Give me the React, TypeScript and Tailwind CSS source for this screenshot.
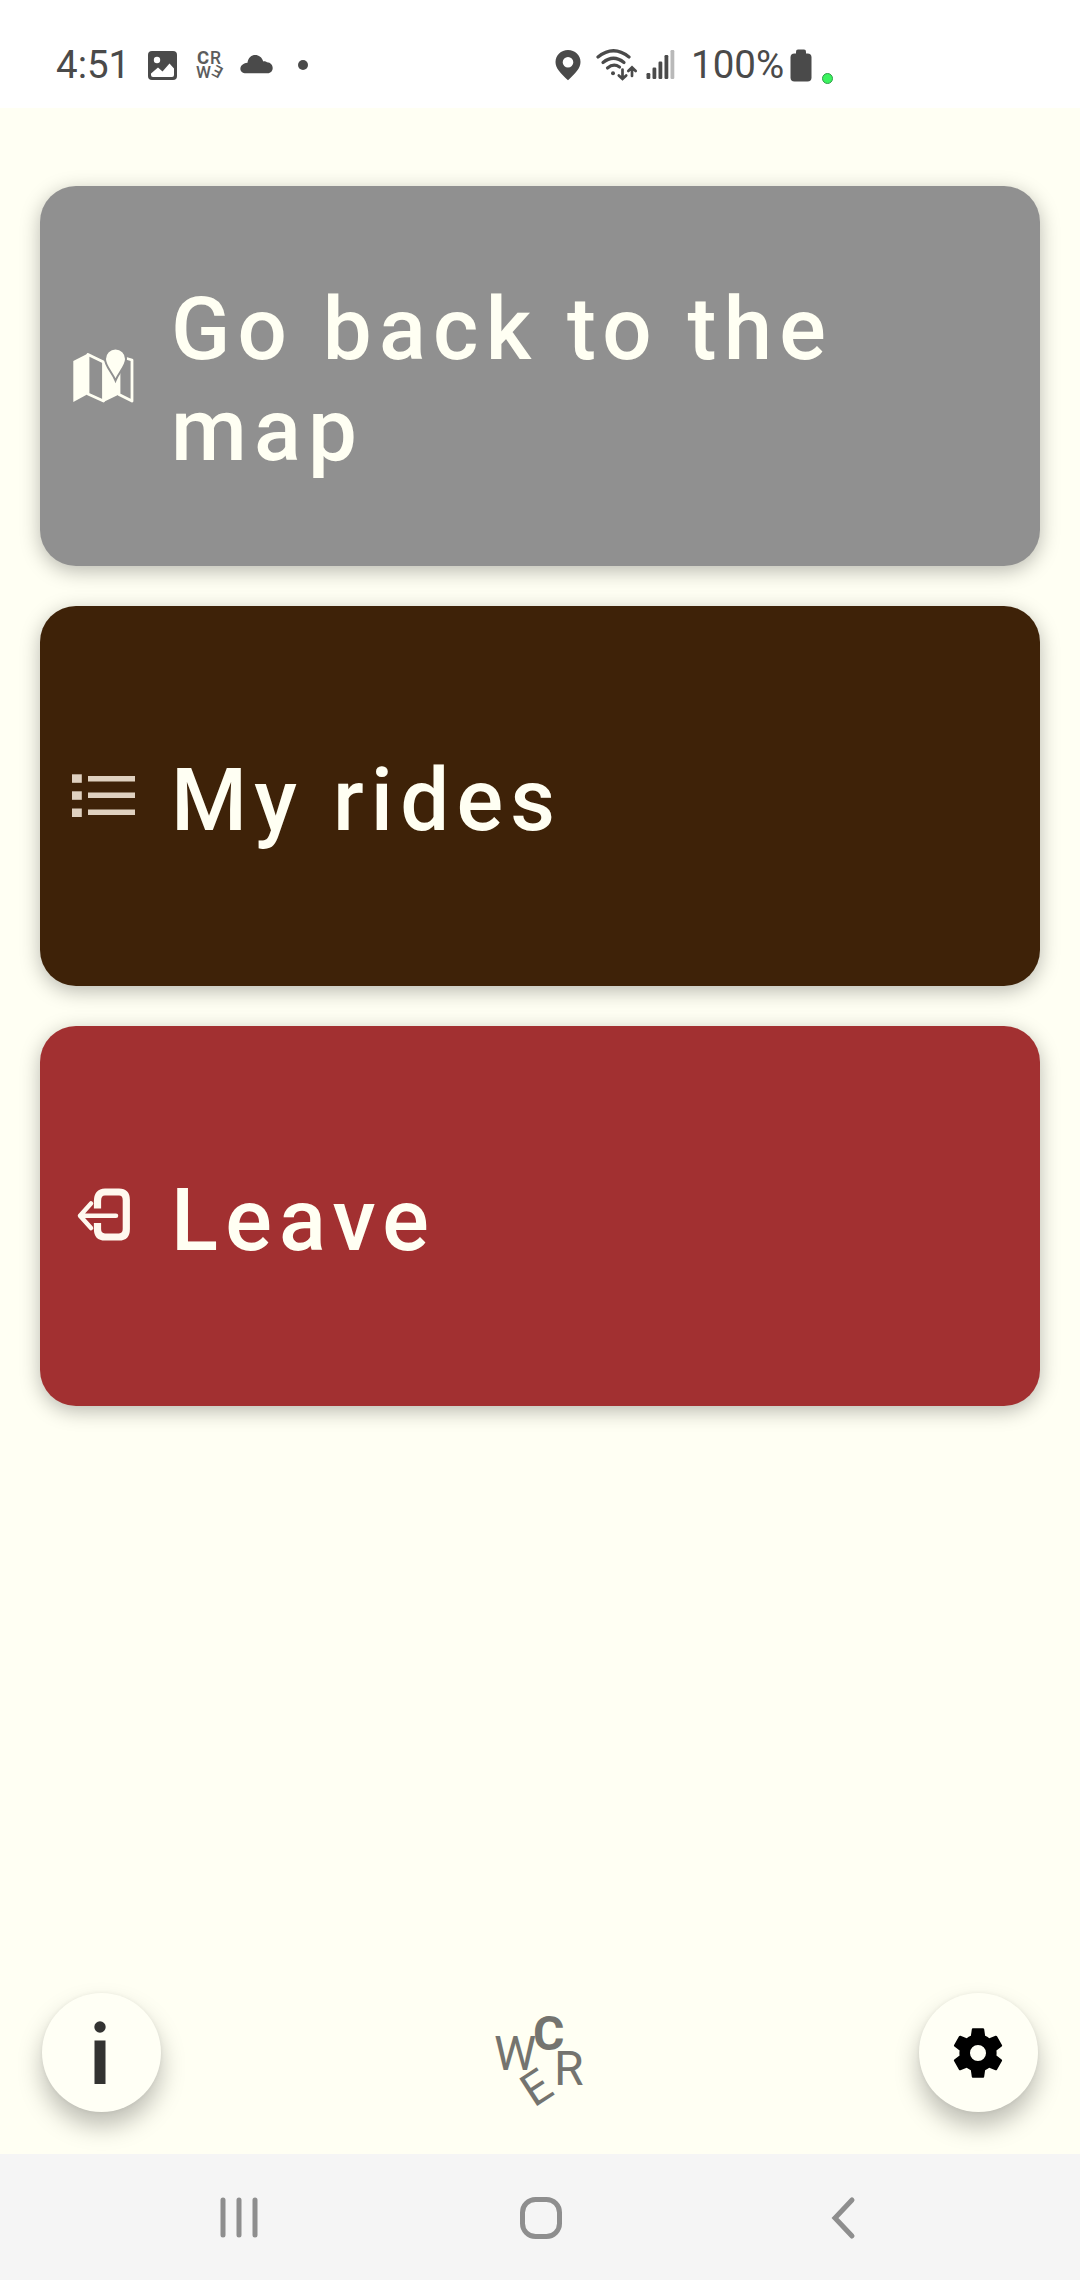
import type { ReactNode } from "react";

const ACTIONS = [
  { label: "Go back to the map", bg: "bg-[#909090]", icon: <MapIcon /> },
  { label: "My rides", bg: "bg-[#3e2208]", icon: <ListIcon /> },
  { label: "Leave", bg: "bg-[#a23031]", icon: <LeaveIcon /> },
];

export default function App() {
  return (
    <div className="flex flex-col h-[2280px] w-[1080px] bg-[#fffff3] font-[Roboto,sans-serif] overflow-hidden">
      <StatusBar />

      {/* Menu cards */}
      <main className="flex-1 flex flex-col gap-10 px-10 pt-[78px]">
        {ACTIONS.map((a) => (
          <ActionCard key={a.label} label={a.label} bg={a.bg} icon={a.icon} />
        ))}
      </main>

      {/* Bottom actions */}
      <footer className="flex items-start justify-between px-[42px] h-[161px]">
        <RoundButton label="Info">
          <svg width="12" height="64" viewBox="0 0 12 64" fill="#333331" className="-ml-1">
            <circle cx="6" cy="6" r="5.7" />
            <rect x="0.5" y="19.5" width="11" height="43.5" />
          </svg>
        </RoundButton>
        <Logo />
        <RoundButton label="Settings">
          <svg width="62" height="62" viewBox="0 0 24 24" className="-ml-px">
            <path d="M19.14 12.94c.04-.3.06-.61.06-.94 0-.32-.02-.64-.07-.94l2.03-1.58a.49.49 0 0 0 .12-.61l-1.92-3.32a.488.488 0 0 0-.59-.22l-2.39.96c-.5-.38-1.03-.7-1.62-.94l-.36-2.54a.484.484 0 0 0-.48-.41h-3.84c-.24 0-.43.17-.47.41l-.36 2.54c-.59.24-1.13.57-1.62.94l-2.39-.96c-.22-.08-.47 0-.59.22L2.74 8.87c-.12.21-.08.47.12.61l2.03 1.58c-.05.3-.09.63-.09.94s.02.64.07.94l-2.03 1.58a.49.49 0 0 0-.12.61l1.92 3.32c.12.22.37.29.59.22l2.39-.96c.5.38 1.03.7 1.62.94l.36 2.54c.05.24.24.41.48.41h3.84c.24 0 .44-.17.47-.41l.36-2.54c.59-.24 1.13-.56 1.62-.94l2.39.96c.22.08.47 0 .59-.22l1.92-3.32c.12-.22.07-.47-.12-.61l-2.01-1.58zM12 15.1A3.1 3.1 0 1 1 12 8.9a3.1 3.1 0 0 1 0 6.2z" />
          </svg>
        </RoundButton>
      </footer>

      <NavBar />
    </div>
  );
}

/* ─── Status bar ─────────────────────────────────────────── */
function StatusBar() {
  return (
    <header className="flex items-start h-[108px] pt-12 bg-white text-[#4a4a4a] text-[38.5px] leading-[34px]">
      <span className="ml-14 w-[91px]">4:51</span>

      {/* Picture */}
      <svg width="32" height="34" viewBox="0 0 32 34" fill="#4a4a4a">
        <rect x="1" y="3" width="29" height="29" rx="4" />
        <circle cx="10" cy="12" r="3.2" fill="#fff" />
        <path d="M4 25.5 L11 19.5 L15.5 23.5 L22.5 15.5 L27 20.5 V27 Q27 29 25 29 H6 Q4 29 4 27 Z" fill="#fff" />
      </svg>

      {/* Small app mark */}
      <svg width="32" height="34" viewBox="0 0 32 34" className="ml-4" fill="#5c5c5c" fontFamily="Roboto, sans-serif">
        <text x="2" y="15.5" fontSize="18.5" fontWeight="700">C</text>
        <text x="15" y="15.5" fontSize="17.5" fontWeight="500">R</text>
        <text x="1" y="30" fontSize="17" fontWeight="500">W</text>
        <text x="-5" y="5.8" fontSize="16" fontWeight="500" transform="translate(22 23.5) rotate(-152)">E</text>
      </svg>

      {/* Cloud */}
      <svg width="36" height="34" viewBox="0 0 36 34" className="ml-3" fill="#4a4a4a">
        <path d="M7 25.3 H28.5 C35.5 25.3 35.5 14.5 28 14.2 C26 12.8 24.5 13.5 24.2 13.5 C22 4.5 9.5 4.5 8.5 14.8 C-1 16 -.5 25.3 7 25.3 Z" />
      </svg>

      <svg width="12" height="34" viewBox="0 0 12 34" className="ml-[22px]" fill="#4a4a4a">
        <circle cx="6" cy="17" r="5" />
      </svg>

      {/* Location */}
      <svg width="26" height="34" viewBox="0 0 26 34" className="ml-[246px]" fill="#4a4a4a">
        <path fillRule="evenodd" d="M13 2 C6 2 .5 7.3 .5 14 C.5 20.5 5.5 25 13 32.3 C20.5 25 25.5 20.5 25.5 14 C25.5 7.3 20 2 13 2 Z M13 9 A5.3 5.3 0 1 1 13 19.6 A5.3 5.3 0 1 1 13 9 Z" />
      </svg>

      {/* Wifi with transfer arrows */}
      <svg width="44" height="34" viewBox="0 0 44 34" className="ml-3.5" fill="none" stroke="#4a4a4a" strokeWidth="3.2" strokeLinecap="round">
        <path d="M3 9 Q18.5 -3.5 34 9" />
        <path d="M8 14.5 Q18.5 6 29 14.5" />
        <path d="M12.5 20 Q18.5 15 24.5 19" />
        <circle cx="18" cy="25.2" r="2" fill="#4a4a4a" stroke="none" />
        <path d="M27.5 21.5 V30.5 M23.8 27.5 L27.5 31 L31.2 27.5 M37 28 V19.5 M33.3 23 L37 19.3 L40.7 23" strokeWidth="2.7" />
      </svg>

      {/* Signal */}
      <svg width="30" height="34" viewBox="0 0 30 34" className="ml-[7px]" fill="#4a4a4a">
        <rect x="0.5" y="25" width="3.8" height="6" rx="1.2" />
        <rect x="6.5" y="19.5" width="3.8" height="11.5" rx="1.2" />
        <rect x="12.5" y="13.5" width="3.8" height="17.5" rx="1.2" />
        <rect x="18.5" y="7" width="3.8" height="24" rx="1.2" />
        <rect x="24.5" y="2" width="3.8" height="29" rx="1.2" fill="#b9b9b9" />
      </svg>

      <span className="ml-[15px] w-[99px]">100%</span>

      {/* Battery */}
      <svg width="22" height="34" viewBox="0 0 22 34" fill="#4a4a4a">
        <rect x="6" y="1.5" width="10" height="8" rx="2" />
        <rect x="0.5" y="5.5" width="21" height="28" rx="4" />
      </svg>

      <span className="ml-2.5 mt-[25px] size-[11px] rounded-full bg-[#3bf35f] border border-[#2f9c48]" />
    </header>
  );
}

/* ─── Action card ────────────────────────────────────────── */
function ActionCard({ label, bg, icon }: { label: string; bg: string; icon: ReactNode }) {
  return (
    <button
      className={`${bg} flex items-center h-[380px] shrink-0 pl-8 pr-24 rounded-[36px] text-left shadow-[0_5px_20px_rgba(0,0,0,0.28)]`}
    >
      <span className="w-16 shrink-0">{icon}</span>
      <span className="ml-[35px] pt-2 text-[87px] leading-[101px] font-medium tracking-[7.2px] text-[#fffff3]">
        {label}
      </span>
    </button>
  );
}

function MapIcon() {
  return (
    <svg width="64" height="64" viewBox="0 3 64 64" fill="#fffff3">
      <path d="M1.3 20 L16 12.5 V53 L1.3 61 Z" />
      <path d="M31.5 20 L47 26 V53.5 L31.5 61 Z" />
      <path d="M16 13.5 L31.5 21 V60 L16 53 Z M47 27 V53.5 L60 60 V19 L53 17" fill="none" stroke="#fffff3" strokeWidth="2.8" strokeLinejoin="round" />
      <path d="M43.5 39.5 C40 31 33 25 33 18 A10.5 10.5 0 0 1 54 18 C54 25 47 31 43.5 39.5 Z" stroke="#909090" strokeWidth="2" />
    </svg>
  );
}

function ListIcon() {
  return (
    <svg width="64" height="64" viewBox="0 0 64 64" fill="#dfd1c0">
      <rect x="0" y="10.3" width="9.8" height="8.5" />
      <rect x="0" y="27.3" width="9.8" height="8.5" />
      <rect x="0" y="44.5" width="9.8" height="8.5" />
      <rect x="16" y="12" width="47" height="5.5" />
      <rect x="16" y="28.5" width="47" height="5.5" />
      <rect x="16" y="45.5" width="47" height="5.5" />
    </svg>
  );
}

function LeaveIcon() {
  return (
    <svg width="64" height="64" viewBox="0 0 64 64" fill="none" stroke="#fff8ee">
      <path d="M25.5 24.5 V17 Q25.5 8 33 8 H47 Q54.3 8 54.3 16 V45 Q54.3 53 47 53 H33 Q25.5 53 25.5 45 V39" strokeWidth="7.2" />
      <path d="M44 31.7 H8 M19 19.5 L8 31.7 L19 44" strokeWidth="4.5" strokeLinecap="round" strokeLinejoin="round" />
    </svg>
  );
}

/* ─── Footer pieces ──────────────────────────────────────── */
function RoundButton({ label, children }: { label: string; children: ReactNode }) {
  return (
    <button
      aria-label={label}
      className="flex items-center justify-center size-[119px] rounded-full bg-[#fffff5] shadow-[0_14px_24px_rgba(0,0,0,0.26),0_0_4px_rgba(0,0,0,0.06)]"
    >
      {children}
    </button>
  );
}

function Logo() {
  return (
    <svg width="96" height="135" viewBox="0 0 96 135" fill="#74746f" fontFamily="Roboto, sans-serif">
      <text x="2" y="77" fontSize="47.5">W</text>
      <text x="41" y="56.5" fontSize="48" fontWeight="700">C</text>
      <text x="62" y="92" fontSize="48">R</text>
      <text x="0" y="0" fontSize="46" transform="translate(42 115) rotate(-33)">E</text>
    </svg>
  );
}

/* ─── System navigation ──────────────────────────────────── */
function NavBar() {
  return (
    <nav className="flex items-center h-[126px] bg-[#f5f5f5]">
      <svg width="42" height="48" viewBox="0 0 42 48" className="ml-[218px]" stroke="#8e8e8e" strokeWidth="5" strokeLinecap="round">
        <path d="M5 7 V42 M21 7 V42 M37 7 V42" />
      </svg>
      <svg width="48" height="48" viewBox="0 0 48 48" className="ml-[257px]" fill="none" stroke="#8e8e8e" strokeWidth="5">
        <rect x="5.5" y="6.5" width="37" height="37" rx="13" />
      </svg>
      <svg width="32" height="48" viewBox="0 0 32 48" className="ml-[262px]" fill="none" stroke="#8e8e8e" strokeWidth="5" strokeLinecap="round">
        <path d="M25 7 L8 25 L25 43" />
      </svg>
    </nav>
  );
}
